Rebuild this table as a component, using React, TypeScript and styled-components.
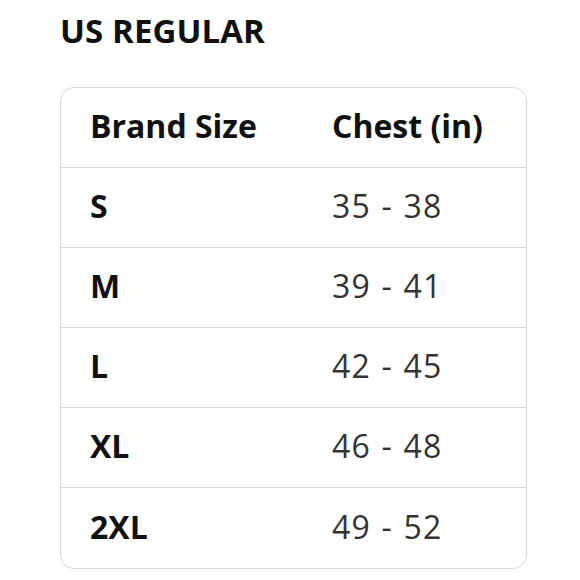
import React from 'react';
import styled, { createGlobalStyle } from 'styled-components';

const GlobalStyle = createGlobalStyle`
  html, body {
    margin: 0;
    padding: 0;
    background: #ffffff;
  }
  body {
    font-family: "Open Sans", "Noto Sans", sans-serif;
    color: #0f1111;
  }
`;

const Page = styled.div`
  width: 580px;
  height: 580px;
  box-sizing: border-box;
  padding: 10px 52px 0 60px;
`;

const Title = styled.h2`
  margin: 0 0 35px 0;
  font-size: 33px;
  font-weight: 700;
  line-height: 42px;
  letter-spacing: 0.1px;
  color: #0f1111;
`;

const TableCard = styled.div`
  width: 467px;
  box-sizing: border-box;
  border: 1.5px solid #d5d9d9;
  border-radius: 14px;
  overflow: hidden;
`;

const Row = styled.div<{ $last?: boolean }>`
  display: grid;
  grid-template-columns: 242px 1fr;
  box-sizing: border-box;
  height: 80px;
  align-items: center;
  padding: 0 0 4px 29px;
  border-bottom: ${p => (p.$last ? 'none' : '1.5px solid #d5d9d9')};
`;

const Cell = styled.div<{ $bold?: boolean }>`
  font-size: 32px;
  font-weight: ${p => (p.$bold ? 700 : 400)};
  color: ${p => (p.$bold ? '#111111' : '#333333')};
  letter-spacing: ${p => (p.$bold ? '0' : '1.2px')};
  word-spacing: ${p => (p.$bold ? '0' : '1px')};
  white-space: nowrap;
`;

const rows = [
  ['S', '35 - 38'],
  ['M', '39 - 41'],
  ['L', '42 - 45'],
  ['XL', '46 - 48'],
  ['2XL', '49 - 52'],
];

export default function App() {
  return (
    <>
      <GlobalStyle />
      <Page>
        <Title>US REGULAR</Title>
        <TableCard>
          <Row>
            <Cell $bold>Brand Size</Cell>
            <Cell $bold>Chest (in)</Cell>
          </Row>
          {rows.map(([size, chest], i) => (
            <Row key={size} $last={i === rows.length - 1}>
              <Cell $bold>{size}</Cell>
              <Cell>{chest}</Cell>
            </Row>
          ))}
        </TableCard>
      </Page>
    </>
  );
}
